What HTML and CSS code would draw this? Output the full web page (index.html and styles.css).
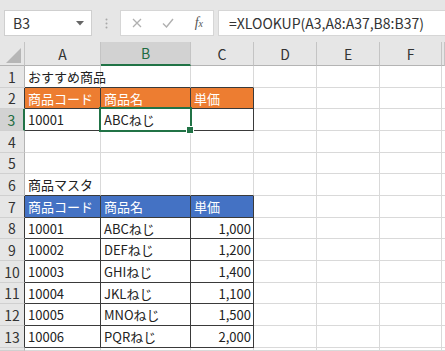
FILE: index.html
```html
<!DOCTYPE html>
<html lang="ja">
<head>
  <meta charset="UTF-8">
  <title>XLOOKUP</title>
  <link rel="stylesheet" href="styles.css">
</head>
<body>
  <div class="toolbar">
    <div class="namebox">
      <span>B3</span>
      <svg width="8" height="5" viewBox="0 0 8 5"><path d="M0 0h8L4 4.5z" fill="#666"/></svg>
    </div>
    <div class="grip">
      <svg width="3" height="11" viewBox="0 0 3 11"><circle cx="1.5" cy="1.5" r="1" fill="#a8a8a8"/><circle cx="1.5" cy="5.5" r="1" fill="#a8a8a8"/><circle cx="1.5" cy="9.5" r="1" fill="#a8a8a8"/></svg>
    </div>
    <div class="fbuttons">
      <svg width="10" height="10" viewBox="0 0 10 10"><path d="M1 1l8 8M9 1l-8 8" stroke="#b0b0b0" stroke-width="1.3" fill="none"/></svg>
      <svg width="12" height="10" viewBox="0 0 12 10"><path d="M1 5.5l3.5 3.5L11 1" stroke="#b0b0b0" stroke-width="1.4" fill="none"/></svg>
      <span class="fx"><i>f</i><i class="x">x</i></span>
    </div>
    <div class="formula">=XLOOKUP(A3,A8:A37,B8:B37)</div>
  </div>

  <div class="sheet">
    <div class="ch corner"><svg width="15" height="15" viewBox="0 0 15 15"><path d="M15 0V15H0z" fill="#b6b6b6"/></svg></div>
    <div class="ch">A</div><div class="ch sel">B</div><div class="ch">C</div><div class="ch">D</div><div class="ch">E</div><div class="ch">F</div><div class="ch"></div>

    <div class="rh">1</div><div class="c bt">おすすめ商品</div><div class="c bt"></div><div class="c bt"></div><div class="c"></div><div class="c"></div><div class="c"></div><div class="c"></div>

    <div class="rh bl">2</div><div class="c b orange">商品コード</div><div class="c b orange">商品名</div><div class="c b orange">単価</div><div class="c"></div><div class="c"></div><div class="c"></div><div class="c"></div>

    <div class="rh sel">3</div><div class="c b">10001</div><div class="c b active">ABCねじ</div><div class="c b"></div><div class="c"></div><div class="c"></div><div class="c"></div><div class="c"></div>

    <div class="rh">4</div><div class="c"></div><div class="c"></div><div class="c"></div><div class="c"></div><div class="c"></div><div class="c"></div><div class="c"></div>

    <div class="rh">5</div><div class="c"></div><div class="c"></div><div class="c"></div><div class="c"></div><div class="c"></div><div class="c"></div><div class="c"></div>

    <div class="rh">6</div><div class="c bt">商品マスタ</div><div class="c bt"></div><div class="c bt"></div><div class="c"></div><div class="c"></div><div class="c"></div><div class="c"></div>

    <div class="rh bl">7</div><div class="c b blue">商品コード</div><div class="c b blue">商品名</div><div class="c b blue">単価</div><div class="c"></div><div class="c"></div><div class="c"></div><div class="c"></div>

    <div class="rh bl">8</div><div class="c b">10001</div><div class="c b">ABCねじ</div><div class="c b num">1,000</div><div class="c"></div><div class="c"></div><div class="c"></div><div class="c"></div>

    <div class="rh bl">9</div><div class="c b">10002</div><div class="c b">DEFねじ</div><div class="c b num">1,200</div><div class="c"></div><div class="c"></div><div class="c"></div><div class="c"></div>

    <div class="rh bl">10</div><div class="c b">10003</div><div class="c b">GHIねじ</div><div class="c b num">1,400</div><div class="c"></div><div class="c"></div><div class="c"></div><div class="c"></div>

    <div class="rh bl">11</div><div class="c b">10004</div><div class="c b">JKLねじ</div><div class="c b num">1,100</div><div class="c"></div><div class="c"></div><div class="c"></div><div class="c"></div>

    <div class="rh bl">12</div><div class="c b">10005</div><div class="c b">MNOねじ</div><div class="c b num">1,500</div><div class="c"></div><div class="c"></div><div class="c"></div><div class="c"></div>

    <div class="rh bl">13</div><div class="c b">10006</div><div class="c b">PQRねじ</div><div class="c b num">2,000</div><div class="c"></div><div class="c"></div><div class="c"></div><div class="c"></div>

    <div class="rh"></div><div class="c"></div><div class="c"></div><div class="c"></div><div class="c"></div><div class="c"></div><div class="c"></div><div class="c"></div>
  </div>
</body>
</html>
```

FILE: styles.css
```css
* {
  box-sizing: border-box;
}
body {
  margin: 0;
  width: 445px;
  height: 351px;
  overflow: hidden;
  background: #fff;
  font-family: "Noto Sans CJK JP", "Noto Sans", sans-serif;
  color: #222;
}
.toolbar {
  height: 42px;
  background: #e6e6e6;
  display: flex;
  align-items: flex-start;
  padding: 10px 0 0 4px;
}
.namebox {
  width: 88px;
  height: 26px;
  background: #fff;
  border: 1px solid #cfcfcf;
  display: flex;
  align-items: center;
  justify-content: space-between;
  padding: 0 7px 0 8px;
  font-size: 14px;
  color: #333;
}
.grip {
  width: 28px;
  height: 26px;
  display: flex;
  align-items: center;
  justify-content: center;
}
.fbuttons {
  width: 94px;
  height: 26px;
  background: #fff;
  border: 1px solid #d6d6d6;
  display: flex;
  align-items: center;
  justify-content: space-between;
  padding: 0 10px 0 11px;
}
.fx {
  font-family: "Liberation Serif", serif;
  font-size: 14px;
  color: #555;
}
.fx .x {
  font-size: 10px;
}
.formula {
  margin-left: 4px;
  flex: 1;
  height: 26px;
  background: #fff;
  border: 1px solid #d6d6d6;
  border-right: none;
  padding-left: 10px;
  font-size: 14px;
  line-height: 24px;
  color: #333;
  white-space: nowrap;
  overflow: hidden;
}
.sheet {
  display: grid;
  grid-template-columns: 25px 76px 90px 63px 63px 63px 62px 3px;
  grid-template-rows: 24px repeat(4, 22px 21px 22px) 22px 3px;
  font-size: 13px;
  overflow: hidden;
}
.ch {
  background: #e6e6e6;
  border-right: 1px solid #c4c4c4;
  border-bottom: 1px solid #b4b4b4;
  display: flex;
  align-items: center;
  justify-content: center;
  font-size: 14px;
  color: #333;
}
.ch.corner {
  align-items: flex-end;
  justify-content: flex-end;
  padding: 0 3px 2px 0;
}
.ch.sel {
  background: #d2d2d2;
  color: #1e6c41;
  border-bottom: 2px solid #217346;
}
.rh {
  background: #e6e6e6;
  border-right: 1px solid #b4b4b4;
  border-bottom: 1px solid #d0d0d0;
  display: flex;
  align-items: center;
  justify-content: center;
  font-size: 14px;
  color: #333;
}
.rh.sel {
  background: #d2d2d2;
  color: #1e6c41;
  border-right: 2px solid #217346;
}
.c {
  border-right: 1px solid #d9d9d9;
  border-bottom: 1px solid #d9d9d9;
  padding: 0 3px;
  display: flex;
  align-items: center;
  white-space: nowrap;
}
.c.bt {
  border-bottom-color: #3a3a3a;
}
.c.b {
  border-right-color: #3a3a3a;
  border-bottom-color: #3a3a3a;
}
.rh.bl {
  border-right-color: #3a3a3a;
}
.orange {
  background: #ed7d31;
  color: #fff;
}
.blue {
  background: #4472c4;
  color: #fff;
}
.num {
  justify-content: flex-end;
  padding-right: 2px;
}
.active {
  position: relative;
}
.active::before {
  content: "";
  position: absolute;
  top: -2px;
  left: -2px;
  right: -2px;
  bottom: -2px;
  border: 2px solid #217346;
}
.active::after {
  content: "";
  position: absolute;
  right: -4px;
  bottom: -4px;
  width: 6px;
  height: 6px;
  background: #217346;
  border: 1px solid #fff;
}
```
